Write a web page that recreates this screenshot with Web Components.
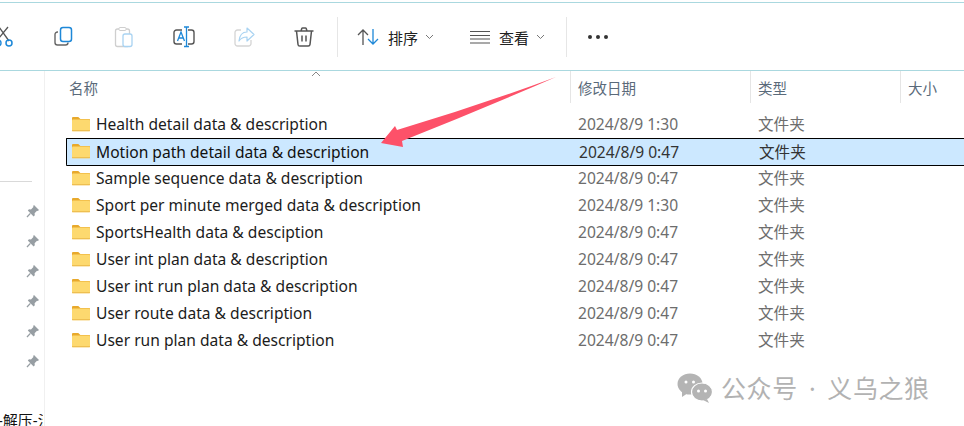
<!DOCTYPE html>
<html>
<head>
<meta charset="utf-8">
<style>
  html, body { margin: 0; padding: 0; background: #fff; }
  body { width: 964px; height: 426px; overflow: hidden; font-family: "Noto Sans", "Noto Sans CJK SC", sans-serif; }
</style>
</head>
<body>
<explorer-window></explorer-window>

<template id="tool-tpl">
  <style>
    :host { display: flex; align-items: center; justify-content: center; width: 24px; height: 24px; }
    svg { width: 24px; height: 24px; display: block; overflow: visible; }
  </style>
  <slot></slot>
</template>

<script>
'use strict';

const FOLDER = `<svg width="20" height="16" viewBox="0 0 20 16">
  <path d="M1 2.2C1 1.5 1.5 1 2.2 1h4.6c.4 0 .7.1 1 .4L9.4 3H18c.6 0 1 .4 1 1v1H1z" fill="#e8a92c"/>
  <rect x="1" y="3.600" width="18" height="11.600" rx="1" fill="#fdd96f"/>
  <rect x="1" y="14.200" width="18" height="1" fill="#eab84a"/>
</svg>`;

class FolderRow extends HTMLElement {
  constructor() {
    super();
    const shadow = this.attachShadow({ mode: 'open' });
    shadow.innerHTML = `
      <style>
        :host { display: grid; grid-template-columns: 512px 180px 1fr; height: 27px; align-items: center;
          box-sizing: border-box; margin-left: 21px; font-size: 15.600px; line-height: 25px; color: #6d6d6d; }
        .name { display: flex; align-items: center; gap: 5px; padding-left: 5px; color: #1c1c1c; white-space: nowrap; }
        svg { display: block; margin-top: -2px; }
        :host([selected]) { background: #cce8ff; border: solid #000; border-width: 1px 0 0 1px; box-shadow: 0 1px 0 #000;
          border-radius: 1px 0 0 1px; color: #333; }
        :host([selected]) .name { color: #111; padding-left: 4px; }
      </style>
      <div class="name">${FOLDER}<span>${this.getAttribute('name')}</span></div>
      <div>${this.getAttribute('date')}</div>
      <div>文件夹</div>`;
  }
}
customElements.define('folder-row', FolderRow);

class ToolButton extends HTMLElement {
  constructor() {
    super();
    const shadow = this.attachShadow({ mode: 'open' });
    shadow.appendChild(document.getElementById('tool-tpl').content.cloneNode(true));
  }
}
customElements.define('tool-button', ToolButton);

class MenuButton extends HTMLElement {
  constructor() {
    super();
    this.attachShadow({ mode: 'open' }).innerHTML = `
      <style>
        :host { display: flex; align-items: center; color: #222; font-size: 15px; }
        .label { margin-left: 9px; }
        .chev { margin-left: 7px; }
      </style>
      <slot></slot>
      <span class="label">${this.getAttribute('label')}</span>
      <svg class="chev" width="9" height="6" viewBox="0 0 9 6"><path d="M1 1l3.500 3.500L8 1" fill="none" stroke="#777" stroke-width="1"/></svg>`;
  }
}
customElements.define('menu-button', MenuButton);

class HeadCell extends HTMLElement {
  constructor() {
    super();
    this.attachShadow({ mode: 'open' }).innerHTML = `
      <style>
        :host { display: flex; align-items: center; box-sizing: border-box; height: 32px; padding-left: 7px;
          border-left: 1px solid #e5e5e5; font-size: 14.500px; color: #5a6a7a; }
        :host([plain]) { border-left: 0; padding-left: 24px; }
      </style>
      <slot></slot>`;
  }
}
customElements.define('head-cell', HeadCell);

class PinItem extends HTMLElement {
  constructor() {
    super();
    this.attachShadow({ mode: 'open' }).innerHTML = `
      <style>
        :host { display: block; height: 30px; }
        svg { display: block; margin-left: 26px; }
      </style>
      <svg width="14" height="14" viewBox="0 0 14 14">
        <path d="M8 1l5 5-1.200 1-.8-.2-2.400 2.400.2 2L7.600 12.400 1.800 6.400 3 5.200l2 .2 2.400-2.400L7.200 2z" fill="#979ea3"/>
        <path d="M4.400 9.400L1 13" stroke="#979ea3" stroke-width="1.300" fill="none"/>
      </svg>`;
  }
}
customElements.define('pin-item', PinItem);

class ExplorerWindow extends HTMLElement {
  constructor() {
    super();
    const rows = [
      ['Health detail data &amp; description', '2024/8/9 1:30'],
      ['Motion path detail data &amp; description', '2024/8/9 0:47', true],
      ['Sample sequence data &amp; description', '2024/8/9 0:47'],
      ['Sport per minute merged data &amp; description', '2024/8/9 1:30'],
      ['SportsHealth data &amp; desciption', '2024/8/9 0:47'],
      ['User int plan data &amp; description', '2024/8/9 0:47'],
      ['User int run plan data &amp; description', '2024/8/9 0:47'],
      ['User route data &amp; description', '2024/8/9 0:47'],
      ['User run plan data &amp; description', '2024/8/9 0:47'],
    ].map(r => `<folder-row name="${r[0]}" date="${r[1]}"${r[2] ? ' selected' : ''}></folder-row>`).join('');

    this.attachShadow({ mode: 'open' }).innerHTML = `
      <style>
        :host { display: block; position: relative; width: 964px; height: 426px; overflow: hidden; background: #fff; }
        .toolbar { box-sizing: border-box; margin-top: 2px; height: 69px; border-top: 1px solid #aad8df; border-bottom: 1px solid #aad8df;
          display: flex; align-items: center; padding-top: 1px; }
        .tools { display: flex; align-items: center; gap: 36px; margin-left: -8px; }
        .sep { width: 1px; height: 40px; background: #e6e6e6; }
        .main { display: grid; grid-template-columns: 45px 1fr; height: 355px; }
        .side { border-right: 1px solid #f0f0f0; position: relative; }
        .side hr { margin: 110px 12px 0 0; border: 0; border-top: 1px solid #d9d9d9; }
        .pins { margin-top: 22px; }
        .clip { position: absolute; left: 0; top: 343px; width: 43px; height: 12px; overflow: hidden; font-size: 15px; line-height: 12px; color: #111; white-space: nowrap; }
        .clip span { margin-left: -2px; }
        .head { display: grid; grid-template-columns: 525px 180px 150px 64px; }
        .rows { margin-top: 8px; }
        .caret { position: absolute; left: 311px; top: 71px; }
        .arrow { position: absolute; left: 378px; top: 76px; }
        .mark { position: absolute; left: 677px; top: 373px; display: flex; align-items: center; gap: 8px;
          font-size: 25px; line-height: 30px; color: #b2b2b2; letter-spacing: .6px; word-spacing: 4px; white-space: nowrap; }
      </style>
      <div class="toolbar">
        <div class="tools">
          <tool-button><svg viewBox="0 0 24 24" fill="none"><path d="M7 2l10 14M16 2L7 13" stroke="#555" stroke-width="1.300"/><circle cx="6" cy="18" r="3" stroke="#1e88d8" stroke-width="1.500"/><circle cx="17" cy="18" r="3" stroke="#1e88d8" stroke-width="1.500"/></svg></tool-button>
          <tool-button><svg viewBox="0 0 24 24" fill="none"><path d="M6 7H5.500A2.500 2.500 0 0 0 3 9.500v8A2.500 2.500 0 0 0 5.500 20h8a2.500 2.500 0 0 0 2.500-2.500" stroke="#666" stroke-width="1.400"/><rect x="8.500" y="2.500" width="11" height="14" rx="2.500" fill="#fff" stroke="#1e88d8" stroke-width="1.500"/></svg></tool-button>
          <tool-button><svg viewBox="0 0 24 24" fill="none"><rect x="3.500" y="4" width="14" height="17.500" rx="2" stroke="#cfcfcf" stroke-width="1.300"/><rect x="7" y="2.500" width="7" height="3" rx="1" fill="#fff" stroke="#cfcfcf"/><rect x="11" y="9" width="9" height="12.500" rx="2" fill="#fff" stroke="#a9d3f2" stroke-width="1.300"/></svg></tool-button>
          <tool-button><svg viewBox="0 0 24 24" fill="none"><path d="M10 5H4.500A2.500 2.500 0 0 0 2 7.500v9A2.500 2.500 0 0 0 4.500 19H10M16 5h3.500A2.500 2.500 0 0 1 22 7.500v9a2.500 2.500 0 0 1-2.500 2.500H16" stroke="#555" stroke-width="1.400"/><path d="M5.500 16l3.500-9 3.500 9M7 13h4.500" stroke="#1e88d8" stroke-width="1.300"/><path d="M12 2h5M12 21.500h5M14.500 2v19.500" stroke="#1e88d8" stroke-width="1.300"/></svg></tool-button>
          <tool-button><svg viewBox="0 0 24 24" fill="none"><path d="M9 5H5.500A2.500 2.500 0 0 0 3 7.500v11A2.500 2.500 0 0 0 5.500 21h11a2.500 2.500 0 0 0 2.500-2.500V15" stroke="#d5d5d5" stroke-width="1.300"/><path d="M15 3l7 6.500-7 6.500v-4c-3.500 0-6 1-8 4 .5-5 3-9 8-9z" fill="#fff" stroke="#a9d3f2" stroke-width="1.200" stroke-linejoin="round"/></svg></tool-button>
          <tool-button><svg viewBox="0 0 24 24" fill="none" stroke="#555" stroke-width="1.500"><path d="M2.500 6h19M9 6l.8-2.500c.1-.3.4-.5.8-.5h2.800c.4 0 .7.2.8.5L15 6M4.500 6l1.500 13.500c.1 1 1 1.500 1.800 1.500h8.400c.8 0 1.700-.5 1.800-1.500L19.500 6"/><path d="M10 10.500v6M14 10.500v6"/></svg></tool-button>
        </div>
        <div class="sep" style="margin-left:21px"></div>
        <menu-button label="排序" style="margin-left:19px"><svg width="22" height="18" viewBox="0 0 22 18" fill="none"><path d="M6 17V2M1 7l5-5 5 5" stroke="#555" stroke-width="1.300"/><path d="M16 1v15M11 11l5 5 5-5" stroke="#1e88d8" stroke-width="1.300"/></svg></menu-button>
        <menu-button label="查看" style="margin-left:36px"><svg width="20" height="14" viewBox="0 0 20 14" fill="none" stroke="#555" stroke-width="1.200"><path d="M0 1.500h20M0 5.500h20M0 9h20M0 13h20"/></svg></menu-button>
        <div class="sep" style="margin-left:21px"></div>
        <svg width="22" height="6" viewBox="0 0 22 6" style="margin-left:20px"><circle cx="3" cy="3" r="2" fill="#333"/><circle cx="11" cy="3" r="2" fill="#333"/><circle cx="19" cy="3" r="2" fill="#333"/></svg>
      </div>
      <div class="main">
        <div class="side">
          <hr>
          <div class="pins"><pin-item></pin-item><pin-item></pin-item><pin-item></pin-item><pin-item></pin-item><pin-item></pin-item><pin-item></pin-item></div>
          <div class="clip"><span>-解压-流</span></div>
        </div>
        <div>
          <div class="head">
            <head-cell plain>名称</head-cell>
            <head-cell>修改日期</head-cell>
            <head-cell>类型</head-cell>
            <head-cell>大小</head-cell>
          </div>
          <div class="rows">${rows}</div>
        </div>
      </div>
      <svg class="caret" width="10" height="6" viewBox="0 0 10 6"><path d="M1 5l4-4 4 4" fill="none" stroke="#888"/></svg>
      <svg class="arrow" width="180" height="72" viewBox="0 0 180 72"><path d="M178 1Q100 30 19 54L17 50 3 67l22 4-1-6Q100 35 178 1z" fill="#fd5169"/></svg>
      <div class="mark">
        <svg width="36" height="30" viewBox="0 0 36 30"><ellipse cx="13" cy="11" rx="12.500" ry="10.500" fill="#b4b4b4"/><path d="M5 18l0 6 6-4z" fill="#b4b4b4"/><ellipse cx="25" cy="19" rx="10.500" ry="9" fill="#b4b4b4" stroke="#fff" stroke-width="1.200"/><path d="M30 26l2 4-6-3z" fill="#b4b4b4"/><circle cx="9" cy="9" r="1.500" fill="#fff"/><circle cx="16.500" cy="9" r="1.500" fill="#fff"/><circle cx="21.500" cy="18" r="1.500" fill="#fff"/><circle cx="28.500" cy="18" r="1.500" fill="#fff"/></svg>
        <span>公众号 · 义乌之狼</span>
      </div>`;
  }
}
customElements.define('explorer-window', ExplorerWindow);
</script>
</body>
</html>
